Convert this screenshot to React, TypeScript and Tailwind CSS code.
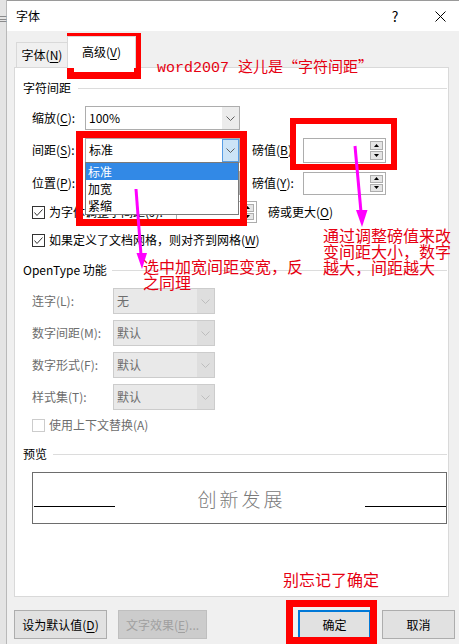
import React from "react";

function U({ children }: { children: React.ReactNode }) {
  return <span className="underline decoration-1 underline-offset-[2px]">{children}</span>;
}

function Chevron({ color = "#606060" }: { color?: string }) {
  return (
    <svg width="9" height="5" viewBox="0 0 9 5">
      <path d="M0.5 0.5L4.5 4.5L8.5 0.5" fill="none" stroke={color} />
    </svg>
  );
}

function Tri({ up }: { up?: boolean }) {
  return (
    <svg width="5" height="3" viewBox="0 0 5 3">
      <polygon points={up ? "0,3 5,3 2.5,0" : "0,0 5,0 2.5,3"} fill="#000" />
    </svg>
  );
}

function Combo({
  value,
  className = "",
  disabled,
  open,
}: {
  value: string;
  className?: string;
  disabled?: boolean;
  open?: boolean;
}) {
  const box = disabled
    ? "border-[#cccccc] bg-[#e9e9e9] text-[#6d6d6d]"
    : "border-[#adadad] bg-white text-black";
  const arrow = open
    ? "bg-[#cce4f7] border border-[#569de5]"
    : disabled
    ? "bg-[#dedede]"
    : "bg-[#ececec]";
  return (
    <div className={`flex border ${box} ${className}`}>
      <div className="flex flex-1 items-center pl-[3px]">{value}</div>
      <div className={`flex w-[17px] items-center justify-center ${arrow}`}>
        <Chevron color={disabled ? "#bdbdbd" : "#606060"} />
      </div>
    </div>
  );
}

function Spinner({ className = "" }: { className?: string }) {
  return (
    <div className={`flex border border-[#adadad] bg-white ${className}`}>
      <div className="flex-1" />
      <div className="flex w-[15px] flex-col gap-px py-[2px] pr-[2px]">
        <div className="flex flex-1 items-center justify-center border border-[#adadad] bg-[#e5e5e5]">
          <Tri up />
        </div>
        <div className="flex flex-1 items-center justify-center border border-[#adadad] bg-[#e5e5e5]">
          <Tri />
        </div>
      </div>
    </div>
  );
}

function Checkbox({ checked, disabled }: { checked?: boolean; disabled?: boolean }) {
  return (
    <div
      className={`flex h-[13px] w-[13px] items-center justify-center border bg-white ${
        disabled ? "border-[#cccccc]" : "border-[#333333]"
      }`}
    >
      {checked && (
        <svg width="11" height="11" viewBox="0 0 11 11">
          <polyline points="1.5,5.5 4,8.5 9.5,2.5" fill="none" stroke="#333" strokeWidth="1" />
        </svg>
      )}
    </div>
  );
}

function GroupHeader({ title, gap }: { title: string; gap: string }) {
  return (
    <div className={`flex h-[18px] items-center ${gap}`}>
      <span>{title}</span>
      <div className="h-px flex-1 bg-[#dcdcdc]" />
    </div>
  );
}

function Button({
  children,
  className = "",
  disabled,
  primary,
}: {
  children: React.ReactNode;
  className?: string;
  disabled?: boolean;
  primary?: boolean;
}) {
  const look = disabled
    ? "border-[#bfbfbf] bg-[#cccccc] text-[#a0a0a0]"
    : primary
    ? "border-2 border-[#0078d7] bg-[#e1e1e1] text-black"
    : "border-[#adadad] bg-[#e1e1e1] text-black";
  return (
    <div className={`flex h-[29px] items-center justify-center border ${look} ${className}`}>
      {children}
    </div>
  );
}

export default function App() {
  return (
    <div className="relative flex h-[644px] w-[459px] overflow-hidden bg-[#f0f0f0] font-['Noto_Sans_CJK_SC',sans-serif] text-[12px] leading-none text-black">
      {/* background window strip */}
      <div className="flex w-[7px] flex-col border-r border-[#b9b9b9] bg-[#e4e4e4]">
        <span className="-ml-[4px] mt-[13px] text-[12px] text-[#777]">≡</span>
      </div>

      <div className="flex flex-1 flex-col">
        {/* title bar */}
        <div className="flex h-[31px] items-center border-t border-[#9a9a9a] bg-white pl-[9px]">
          <span>字体</span>
          <div className="ml-auto flex items-center gap-[15px] pr-[4px]">
            <span className="w-[30px] text-center text-[14px]">?</span>
            <span className="flex w-[30px] justify-center">
              <svg width="11" height="11" viewBox="0 0 11 11">
                <path d="M0.5 0.5L10.5 10.5M10.5 0.5L0.5 10.5" stroke="#000" strokeWidth="1" />
              </svg>
            </span>
          </div>
        </div>

        {/* tabs */}
        <div className="flex h-[36px] items-end pl-[9px]">
          <div className="flex h-[25px] w-[51px] items-center justify-center border-l border-t border-[#d9d9d9]">
            字体(<U>N</U>)
          </div>
          <div className="relative z-10 -mb-px flex h-[32px] w-[69px] items-center justify-center border border-b-0 border-[#d9d9d9] bg-white pb-[2px]">
            高级(<U>V</U>)
          </div>
        </div>

        {/* panel */}
        <div className="ml-[7px] flex h-[530px] w-[435px] flex-col border border-[#d9d9d9] bg-white">
          <div className="mt-[11px] pl-[8px] pr-px">
            <GroupHeader title="字符间距" gap="gap-[7px]" />
          </div>

          <div className="mt-[9px] flex h-[24px] items-center pl-[17px]">
            <span className="w-[53px]">
              缩放(<U>C</U>):
            </span>
            <Combo value="100%" className="h-[24px] w-[155px]" />
          </div>

          <div className="mt-[8px] flex h-[24px] items-center pl-[17px]">
            <span className="w-[53px]">
              间距(<U>S</U>):
            </span>
            <Combo value="标准" open className="h-[25px] w-[155px]" />
            <span className="ml-[12px] w-[51px]">
              磅值(<U>B</U>):
            </span>
            <Spinner className="h-[25px] w-[83px]" />
          </div>

          <div className="mt-[9px] flex h-[24px] items-center pl-[17px]">
            <span className="w-[53px]">
              位置(<U>P</U>):
            </span>
            <Combo value="标准" className="h-[24px] w-[155px]" />
            <span className="ml-[12px] w-[51px]">
              磅值(<U>Y</U>):
            </span>
            <Spinner className="h-[23px] w-[83px]" />
          </div>

          <div className="mt-[6px] flex h-[22px] items-center pl-[17px]">
            <Checkbox checked />
            <span className="ml-[4px] w-[127px]">
              为字体调整字间距(<U>J</U>):
            </span>
            <Spinner className="h-[22px] w-[81px]" />
            <span className="ml-[11px]">
              磅或更大(<U>O</U>)
            </span>
          </div>

          <div className="mt-[6px] flex h-[22px] items-center pl-[17px]">
            <Checkbox checked />
            <span className="ml-[4px]">
              如果定义了文档网格，则对齐到网格(<U>W</U>)
            </span>
          </div>

          <div className="mt-[10px] pl-[8px] pr-px">
            <GroupHeader title="OpenType 功能" gap="gap-[5px]" />
          </div>

          {[
            ["连字(L):", "无", "mt-[9px]"],
            ["数字间距(M):", "默认", "mt-[6px]"],
            ["数字形式(F):", "默认", "mt-[6px]"],
            ["样式集(T):", "默认", "mt-[6px]"],
          ].map(([label, value, mt]) => (
            <div key={label} className={`${mt} flex h-[26px] items-center pl-[17px]`}>
              <span className="w-[81px] text-[#6d6d6d]">{label}</span>
              <Combo value={value} disabled className="h-[26px] w-[102px]" />
            </div>
          ))}

          <div className="mt-[4px] flex h-[22px] items-center pl-[17px]">
            <Checkbox disabled />
            <span className="ml-[4px] text-[#6d6d6d]">使用上下文替换(A)</span>
          </div>

          <div className="mt-[9px] pl-[8px] pr-px">
            <GroupHeader title="预览" gap="gap-[6px]" />
          </div>

          <div className="ml-[17px] mt-[9px] flex h-[52px] w-[415px] border border-[#6d6d6d]">
            <div className="mb-[16px] ml-px h-px w-[81px] self-end bg-black" />
            <div className="flex flex-1 items-center justify-center pl-[3px] text-[19px] font-light tracking-[3px] text-[#7a7a7a]">
              创新发展
            </div>
            <div className="mb-[16px] h-px w-[81px] self-end bg-black" />
          </div>
        </div>

        {/* footer */}
        <div className="flex items-center pr-[4px] pt-[13px]">
          <Button className="ml-[7px] w-[93px]">
            设为默认值(<U>D</U>)
          </Button>
          <Button disabled className="ml-[11px] w-[89px]">
            文字效果(<U>E</U>)...
          </Button>
          <Button primary className="ml-auto w-[73px]">
            确定
          </Button>
          <Button className="ml-[11px] w-[73px]">取消</Button>
        </div>
      </div>

      {/* open dropdown list */}
      <div className="absolute left-[85px] top-[162px] flex h-[53px] w-[154px] flex-col border border-[#7a7a7a] bg-white">
        <div className="flex h-[17px] items-center bg-[#3289e6] pl-[2px] text-white">标准</div>
        <div className="flex h-[17px] items-center pl-[2px]">加宽</div>
        <div className="flex h-[17px] items-center pl-[2px]">紧缩</div>
      </div>

      {/* red annotation boxes */}
      <div className="absolute left-[67px] top-[33px] h-[46px] w-[74px] border-[7px] border-[#ff0000]" />
      <div className="absolute left-[76px] top-[131px] h-[95px] w-[171px] border-[7px] border-[#ff0000]" />
      <div className="absolute left-[290px] top-[118px] h-[52px] w-[107px] border-[6px] border-[#ff0000]" />
      <div className="absolute left-[286px] top-[600px] h-[44px] w-[91px] border-[7px] border-[#ff0000]" />

      {/* magenta arrows */}
      <svg className="pointer-events-none absolute inset-0" width="459" height="644" viewBox="0 0 459 644">
        <line x1="136" y1="189" x2="141" y2="255" stroke="#ff00ff" strokeWidth="3" />
        <polygon points="142,269 136.5,253 147,253" fill="#ff00ff" />
        <line x1="355" y1="146" x2="361" y2="212" stroke="#ff00ff" strokeWidth="3" />
        <polygon points="362,227 356,210 367.5,210" fill="#ff00ff" />
      </svg>

      {/* red annotation text */}
      <div className="absolute left-[157px] top-[57px] text-[15px] leading-[18px] text-[#e60012]">
        <span className="font-['Liberation_Mono',monospace]">word2007 </span>这儿是“字符间距”
      </div>
      <div className="absolute left-[143px] top-[258px] text-[16px] leading-[16px] text-[#e60012]">
        选中加宽间距变宽，反
        <br />
        之同理
      </div>
      <div className="absolute left-[323px] top-[227px] text-[16px] leading-[16px] text-[#e60012]">
        通过调整磅值来改
        <br />
        变间距大小，数字
        <br />
        越大，间距越大
      </div>
      <div className="absolute left-[283px] top-[570px] text-[16px] leading-[18px] text-[#e60012]">
        别忘记了确定
      </div>
    </div>
  );
}
